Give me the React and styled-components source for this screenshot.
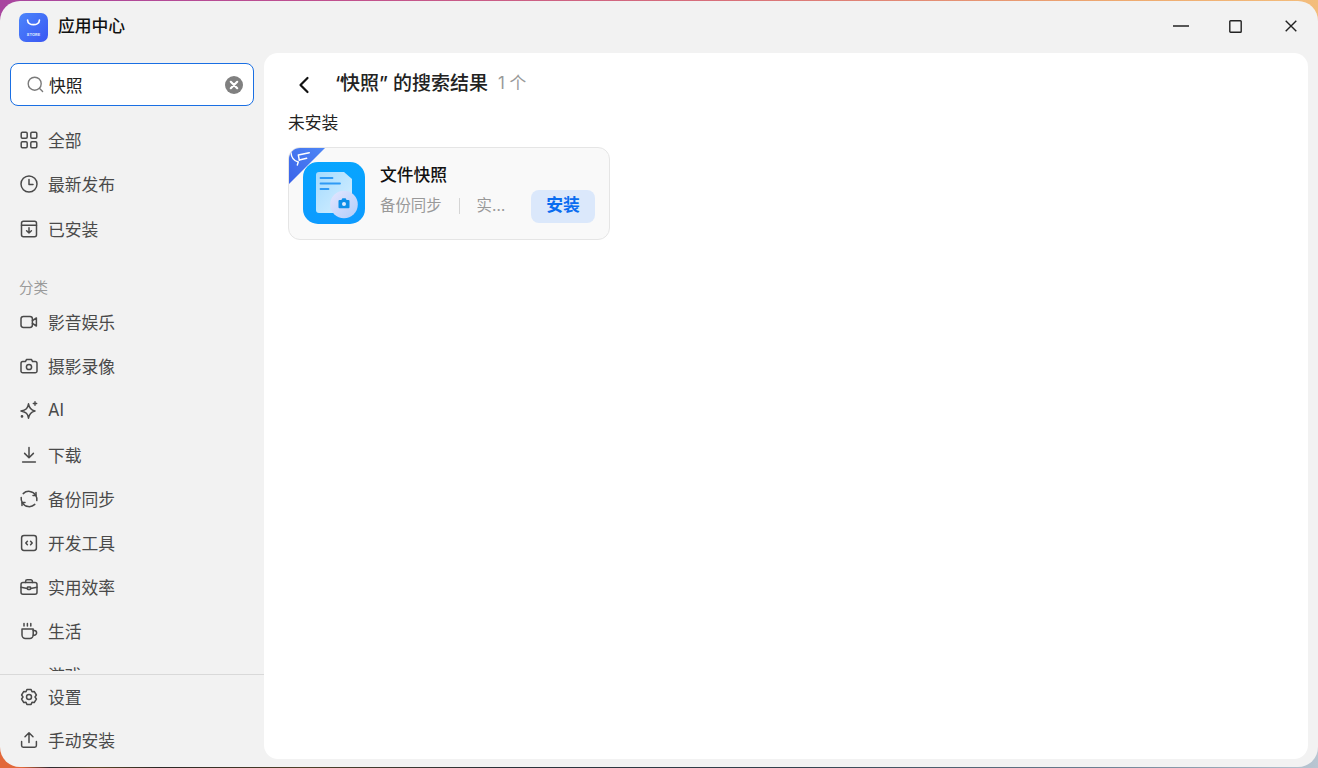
import React from "react";
import styled, { createGlobalStyle } from "styled-components";

const Global = createGlobalStyle`
  html, body { margin: 0; padding: 0; height: 100%; overflow: hidden; }
  body {
    font-family: "Inter", "Noto Sans CJK SC", "Noto Sans", sans-serif;
    background:
      linear-gradient(90deg, #a8459f 0%, #c0508f 25%, #d8707a 55%, #eeaa70 85%, #f3bd7c 100%) top / 100% 60% no-repeat,
      linear-gradient(90deg, #e2683a 0, #e2683a 22px, #2f2a30 50px, #5a4626 95px, #2c2826 160px, #4e4028 300px, #2a3038 500px, #34424e 800px, #6d7f92 1100px, #b9c6d2 1318px) bottom / 100% 40% no-repeat;
  }
  * { box-sizing: border-box; }
`;

const Window = styled.div`
  margin-top: 1px;
  height: 766px;
  width: 1318px;
  background: #f2f2f2;
  border-radius: 20px;
  display: flex;
  flex-direction: column;
  overflow: hidden;
`;

const TitleBar = styled.header`
  height: 52px;
  flex: none;
  display: flex;
  align-items: center;
  padding: 0 0 0 19px;
`;

const LogoMark = styled.svg`
  flex: none;
`;

const AppName = styled.h1`
  margin: -2px 0 0 10px;
  font-size: 16.800px;
  line-height: 24px;
  font-weight: 500;
  color: #111;
  flex: 1;
`;

const WinButton = styled.button`
  width: 55px;
  height: 36px;
  border: 0;
  background: none;
  padding: 0;
  display: flex;
  align-items: center;
  justify-content: center;
  color: #222;
`;

const WinControls = styled.div`
  display: flex;
  margin-top: -2px;
`;

const Body = styled.div`
  flex: 1;
  min-height: 0;
  display: flex;
`;

const Sidebar = styled.aside`
  width: 264px;
  flex: none;
  display: flex;
  flex-direction: column;
`;

const SearchBox = styled.div`
  margin: 10px 10px 0;
  height: 43px;
  flex: none;
  background: #fff;
  border: 1px solid #1a6fe3;
  border-radius: 8px;
  display: flex;
  align-items: center;
  padding: 0 10px 0 16px;
`;

const SearchText = styled.span`
  flex: 1;
  margin-left: 5px;
  font-size: 16.800px;
  color: #222;
`;

const NavScroll = styled.nav`
  flex: 1;
  min-height: 0;
  overflow: hidden;
  margin-top: 12.200px;
  margin-bottom: 3px;
`;

const NavItem = styled.div`
  height: 44.200px;
  display: flex;
  align-items: center;
  padding-left: 20px;
  gap: 10px;
  font-size: 16.800px;
  color: #4a4a4a;
  flex: none;
`;

const SectionLabel = styled.div`
  margin-top: 21.100px;
  height: 28px;
  padding: 2px 0 0 19px;
  display: flex;
  align-items: center;
  font-size: 14.500px;
  color: #9a9a9a;
`;

const SidebarFooter = styled.div`
  flex: none;
  border-top: 1px solid #d9d9d9;
  padding: .5px 0 5.500px;
`;

const FooterItem = styled(NavItem)`
  height: 43px;
`;

const Main = styled.main`
  flex: 1;
  margin: 0 10px 8px 0;
  background: #fff;
  border-radius: 14px;
  padding: 15px 24px;
  min-width: 0;
`;

const ResultHeader = styled.div`
  display: flex;
  align-items: center;
  height: 32px;
`;

const BackButton = styled.button`
  width: 32px;
  margin-right: 15px;
  margin-top: 2px;
  border: 0;
  padding: 0;
  background: none;
  display: flex;
  justify-content: center;
  color: #111;
`;

const ResultTitle = styled.h2`
  margin: -5px 0 0;
  font-size: 19px;
  font-weight: 500;
  color: #222;
`;

const OpenQuote = styled.span`
  letter-spacing: -3px;
`;

const ResultCount = styled.span`
  margin: -5px 0 0 10px;
  font-size: 16.800px;
  color: #999;
`;

const GroupLabel = styled.div`
  margin-top: 11px;
  font-size: 16.800px;
  line-height: 24px;
  color: #222;
`;

const Card = styled.article`
  position: relative;
  overflow: hidden;
  margin-top: 12px;
  width: 322px;
  height: 93px;
  background: #f9f9f9;
  border: 1px solid #e5e5e5;
  border-radius: 12px;
  display: flex;
  align-items: center;
  padding: 0 14px;
`;

const Ribbon = styled.svg`
  position: absolute;
  left: -1px;
  top: -1px;
`;

const AppIconMark = styled.svg`
  flex: none;
  margin-top: -2px;
`;

const CardInfo = styled.div`
  flex: 1;
  min-width: 0;
  margin-left: 15px;
  display: flex;
  flex-direction: column;
  gap: 8px;
  margin-top: -7px;
`;

const CardName = styled.div`
  font-size: 16.800px;
  line-height: 24px;
  font-weight: 500;
  color: #111;
`;

const CardMeta = styled.div`
  display: flex;
  align-items: center;
  font-size: 15.400px;
  line-height: 22px;
  color: #999;
`;

const Divider = styled.i`
  width: 1px;
  height: 16px;
  background: #d5d5d5;
  margin: 0 17px 0 17px;
`;

const Truncated = styled.span`
  width: 32px;
  overflow: hidden;
  white-space: nowrap;
  text-overflow: ellipsis;
`;

const InstallButton = styled.button`
  width: 64px;
  height: 33px;
  flex: none;
  margin-top: 26px;
  border: 0;
  border-radius: 8px;
  background: #dbe8fb;
  color: #0a6cf0;
  font: 700 16.800px "Inter", "Noto Sans CJK SC", sans-serif;
  padding: 0 0 5px;
`;

const I = ({ children, size = 18 }) => (
  <svg width={size} height={size} viewBox="0 0 18 18" fill="none" stroke="#4a4a4a" strokeWidth="1.5" strokeLinecap="round" strokeLinejoin="round">
    {children}
  </svg>
);

const Icons = {
  all: <I><rect x="1.200" y="1.200" width="6" height="6" rx="1.200"/><rect x="10.800" y="1.200" width="6" height="6" rx="1.200"/><rect x="1.200" y="10.800" width="6" height="6" rx="1.200"/><rect x="10.800" y="10.800" width="6" height="6" rx="1.200"/></I>,
  clock: <I><circle cx="9" cy="9" r="8"/><path d="M9 4.600V9.400H13"/></I>,
  installed: <I><rect x="1.500" y="1.200" width="15" height="15.600" rx="2"/><path d="M1.500 5.200H16.500M9 7.800V13M6.600 10.800 9 13l2.400-2.200"/></I>,
  video: <I><rect x="1" y="3.400" width="11.400" height="11" rx="2.400"/><path d="M12.400 7.600 16.400 5v8l-4-2.600"/></I>,
  camera: <I><path d="M2.800 4.600H5.400L6.600 2.400H11.400L12.600 4.600H15.200A1.800 1.800 0 0 1 17 6.400V14A1.800 1.800 0 0 1 15.200 15.800H2.800A1.800 1.800 0 0 1 1 14V6.400A1.800 1.800 0 0 1 2.800 4.600Z"/><circle cx="9" cy="10" r="2.600"/></I>,
  ai: <I><path d="M8.500 2.800C9.200 7.200 10.800 9 15 10 10.800 11 9.200 12.800 8.500 17.200 7.800 12.800 6.200 11 1 10 6.200 9 7.800 7.200 8.500 2.800Z"/><path d="M15 .8V4.200M13.300 2.500H16.700" strokeWidth="1.400"/><circle cx="2" cy="15.400" r=".6"/></I>,
  download: <I><path d="M9 1.500V11.500M4.600 7.400 9 11.800l4.400-4.400M2.600 16H15.400"/></I>,
  sync: <I><path d="M15.600 5.200A8 8 0 0 0 3.200 3.600"/><path d="M2.400 12.800A8 8 0 0 0 14.800 14.400"/><path d="M1.200 7.400A8 8 0 0 0 2.400 12.800"/><path d="M16.800 10.600A8 8 0 0 0 15.600 5.200"/><path d="M13 5.400H16V2.400M5 12.600H2v3"/></I>,
  code: <I><rect x="1.600" y="1.600" width="14.800" height="14.800" rx="2.400"/><path d="M7.400 7.200 5.800 9l1.600 1.800M10.600 7.200 12.200 9l-1.600 1.800"/></I>,
  briefcase: <I><rect x="1" y="4.600" width="16" height="11.600" rx="2"/><path d="M5.600 4.600V3.400A1.600 1.600 0 0 1 7.200 1.800H10.800A1.600 1.600 0 0 1 12.400 3.400V4.600M1 9.200 7.400 10.400M17 9.200 10.600 10.400"/><rect x="7.400" y="9" width="3.200" height="2.400" rx=".6"/></I>,
  coffee: <I><path d="M2 7H13.200V13A3.400 3.400 0 0 1 9.800 16.400H5.400A3.400 3.400 0 0 1 2 13Z"/><path d="M13.200 8.400H14.200A2.400 2.400 0 0 1 14.200 13.200H13.200M4 1.400V4M7.400 1.400V4M10.800 1.400V4"/></I>,
  gear: <I><path d="M6.900 1.600H11.100L12 3.700 14.200 3.400 16.400 7 15 9 16.400 11 14.200 14.600 12 14.300 11.100 16.400H6.900L6 14.300 3.800 14.600 1.600 11 3 9 1.600 7 3.800 3.400 6 3.700Z"/><circle cx="9" cy="9" r="2.500"/></I>,
  upload: <I><path d="M9 11.400V2M5 5.800 9 1.800l4 4M1.600 10.600V14.600A1.600 1.600 0 0 0 3.200 16.200H14.800A1.600 1.600 0 0 0 16.400 14.600V10.600"/></I>,
};

const top = [["all", "全部"], ["clock", "最新发布"], ["installed", "已安装"]];
const cats = [
  ["video", "影音娱乐"], ["camera", "摄影录像"], ["ai", "AI"], ["download", "下载"], ["sync", "备份同步"],
  ["code", "开发工具"], ["briefcase", "实用效率"], ["coffee", "生活"], [null, "游戏"],
];

const Spacer = styled.span`
  width: 18px;
`;

const Logo = () => (
  <LogoMark width="29" height="29" viewBox="0 0 29 29">
    <defs>
      <linearGradient id="lg" x1="0" y1="0" x2="1" y2="1">
        <stop offset="0" stopColor="#4c86fb" />
        <stop offset="1" stopColor="#3a56f3" />
      </linearGradient>
    </defs>
    <rect width="29" height="29" rx="7" fill="url(#lg)" />
    <path d="M8.600 7.200C8.800 13.200 20.200 13.200 20.400 7.200" fill="none" stroke="#fff" strokeWidth="1.700" strokeLinecap="round" />
    <text x="14.500" y="23" textAnchor="middle" fontSize="4" fontWeight="700" fill="#dfe8ff" fontFamily="Inter, sans-serif">STORE</text>
  </LogoMark>
);

const AppIcon = () => (
  <AppIconMark width="62" height="62" viewBox="0 0 62 62">
    <defs>
      <linearGradient id="bg" x1="0" y1="0" x2="0" y2="1">
        <stop offset="0" stopColor="#07a5ff" />
        <stop offset="1" stopColor="#0d9bff" />
      </linearGradient>
      <linearGradient id="doc" x1="0" y1="0" x2="1" y2="1">
        <stop offset="0" stopColor="#a4dbff" />
        <stop offset="1" stopColor="#d6efff" />
      </linearGradient>
      <linearGradient id="disc" x1="0" y1="0" x2="1" y2="1">
        <stop offset="0" stopColor="#e4e6fe" />
        <stop offset="1" stopColor="#b0cdfb" />
      </linearGradient>
    </defs>
    <rect width="62" height="62" rx="15" fill="url(#bg)" />
    <path d="M16 10H41L49 17V48Q49 51 46 51H16Q13 51 13 48V13Q13 10 16 10Z" fill="url(#doc)" />
    <path d="M17.500 16H29.500M17.500 21.500H37M17.500 27H25.500" stroke="#2f9af5" strokeWidth="1.800" strokeLinecap="round" />
    <circle cx="41" cy="42.500" r="13.800" fill="url(#disc)" />
    <path d="M36.500 38H38.400L39.400 36.300H42.600L43.600 38H45.500Q46.500 38 46.500 39V45.300Q46.500 46.300 45.500 46.300H36.500Q35.500 46.300 35.500 45.300V39Q35.500 38 36.500 38Z" fill="#0d8fe8" />
    <circle cx="41" cy="42" r="2" fill="#dcecff" />
  </AppIconMark>
);

export default function App() {
  return (
    <>
      <Global />
      <Window>
        <TitleBar>
          <Logo />
          <AppName>应用中心</AppName>
          <WinControls>
            <WinButton aria-label="min">
              <svg width="16" height="2"><path d="M0 1H16" stroke="#222" strokeWidth="1.400" /></svg>
            </WinButton>
            <WinButton aria-label="max">
              <svg width="13" height="13"><rect x=".8" y=".8" width="11.400" height="11.400" rx=".8" fill="none" stroke="#222" strokeWidth="1.400" /></svg>
            </WinButton>
            <WinButton aria-label="close">
              <svg width="12" height="12"><path d="M.7.7 11.300 11.300M11.300.7.7 11.300" stroke="#222" strokeWidth="1.400" /></svg>
            </WinButton>
          </WinControls>
        </TitleBar>
        <Body>
          <Sidebar>
            <SearchBox>
              <svg width="17" height="17" viewBox="0 0 17 17" fill="none" stroke="#7a7a7a" strokeWidth="1.400" strokeLinecap="round">
                <circle cx="7.700" cy="7.700" r="6.500" /><path d="M12.600 12.600 15.600 15.600" />
              </svg>
              <SearchText>快照</SearchText>
              <svg width="18" height="18" viewBox="0 0 18 18">
                <circle cx="9" cy="9" r="9" fill="#808080" />
                <path d="M5.800 5.800 12.200 12.200M12.200 5.800 5.800 12.200" stroke="#fff" strokeWidth="2.200" strokeLinecap="round" />
              </svg>
            </SearchBox>
            <NavScroll>
              {top.map(([k, t]) => <NavItem key={t}>{Icons[k]}{t}</NavItem>)}
              <SectionLabel>分类</SectionLabel>
              {cats.map(([k, t]) => <NavItem key={t}>{k ? Icons[k] : <Spacer />}{t}</NavItem>)}
            </NavScroll>
            <SidebarFooter>
              <FooterItem>{Icons.gear}设置</FooterItem>
              <FooterItem>{Icons.upload}手动安装</FooterItem>
            </SidebarFooter>
          </Sidebar>
          <Main>
            <ResultHeader>
              <BackButton aria-label="back">
                <svg width="12" height="18" viewBox="0 0 12 18" fill="none" stroke="#111" strokeWidth="2.200" strokeLinecap="round" strokeLinejoin="round">
                  <path d="M9.500 2 2.500 9l7 7" />
                </svg>
              </BackButton>
              <ResultTitle><OpenQuote>“</OpenQuote>快照” 的搜索结果</ResultTitle>
              <ResultCount>1 个</ResultCount>
            </ResultHeader>
            <GroupLabel>未安装</GroupLabel>
            <Card>
              <Ribbon width="38" height="38" viewBox="0 0 38 38">
                <defs>
                  <linearGradient id="rb" x1="0" y1="1" x2="1" y2="0">
                    <stop offset="0" stopColor="#3a62e8" />
                    <stop offset="1" stopColor="#4f88f6" />
                  </linearGradient>
                </defs>
                <path d="M0 0H38L0 38Z" fill="url(#rb)" />
                <g fill="none" stroke="#fff" strokeWidth="1.400" strokeLinecap="round" strokeLinejoin="round">
                  <path d="M3 5.700Q3.500 13 10.300 15L9.300 18" />
                  <path d="M11.300 13 10.300 8 21.300 5.700" />
                  <path d="M11.300 13 18.700 11.300" />
                </g>
              </Ribbon>
              <AppIcon />
              <CardInfo>
                <CardName>文件快照</CardName>
                <CardMeta>
                  备份同步
                  <Divider />
                  <Truncated>实用效率</Truncated>
                </CardMeta>
              </CardInfo>
              <InstallButton>安装</InstallButton>
            </Card>
          </Main>
        </Body>
      </Window>
    </>
  );
}
